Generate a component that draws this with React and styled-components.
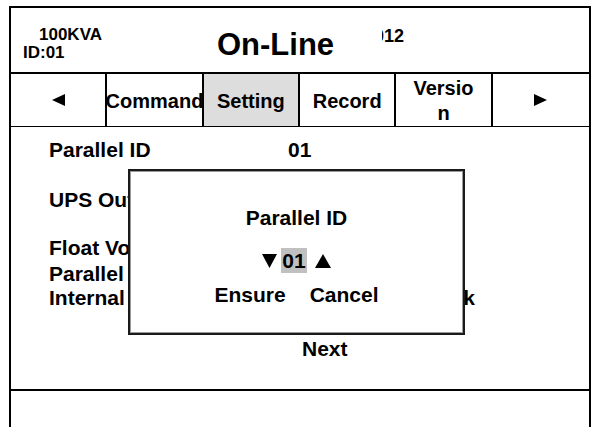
import React from 'react';
import styled, { createGlobalStyle } from 'styled-components';

const GlobalStyle = createGlobalStyle`
  html, body {
    margin: 0;
    padding: 0;
    background: #fff;
  }
  body {
    font-family: 'Liberation Sans', Arial, sans-serif;
    font-weight: bold;
    color: #000;
    overflow: hidden;
  }
`

const Screen = styled.div`
  width: 592px;
  height: 427px;
  padding: 6px 1px 0 9px;
  box-sizing: border-box;
  overflow: hidden;
  background: #fff;
`

const Frame = styled.div`
  height: 440px;
  border: 2px solid #000;
  border-bottom: none;
  display: flex;
  flex-direction: column;
`

const Header = styled.div`
  height: 64px;
  border-bottom: 2px solid #000;
  display: flex;
  align-items: flex-start;
`

const HeaderLeft = styled.div`
  width: 206px;
  padding-top: 18px;
  font-size: 17px;
  line-height: 18px;
`

const Model = styled.div`
  padding-left: 28px;
`

const UnitId = styled.div`
  padding-left: 12px;
`

const Title = styled.div`
  font-size: 31px;
  line-height: 30px;
  padding-top: 22px;
`

const Clock = styled.div`
  width: 22px;
  margin-left: 48px;
  margin-top: 19px;
  overflow: hidden;
  display: flex;
  justify-content: flex-end;
  font-size: 18px;
  line-height: 18px;
  white-space: nowrap;
`

const Tabs = styled.div`
  height: 51px;
  border-bottom: 2px solid #000;
  display: grid;
  grid-template-columns: repeat(6, 1fr);
`

const Tab = styled.div`
  display: flex;
  align-items: center;
  justify-content: center;
  padding: 0 4px;
  border-right: ${p => (p.$last ? 'none' : '2px solid #000')};
  background: ${p => (p.$active ? '#dddddd' : '#fff')};
  font-size: 20px;
  line-height: 25px;
  text-align: center;
  min-width: 0;
`

const TabLabel = styled.span`
  white-space: ${p => (p.$narrow ? 'normal' : 'nowrap')};
  word-break: ${p => (p.$narrow ? 'break-all' : 'normal')};
  max-width: ${p => (p.$narrow ? '64px' : 'none')};
  padding-top: 2px;
`

const Content = styled.div`
  position: relative;
  height: 264px;
  border-bottom: 2px solid #000;
  padding-top: 11px;
  box-sizing: border-box;
  font-size: 21px;
  line-height: 24px;
`

const Row = styled.div`
  display: grid;
  grid-template-columns: 239px 187px;
  padding-left: 38px;
  margin-top: ${p => p.$gap || 0}px;
  white-space: nowrap;
`

const Value = styled.span`
  text-align: ${p => (p.$right ? 'right' : 'left')};
`

const NextLink = styled.div`
  padding-left: 291px;
  margin-top: 27px;
`

const Dialog = styled.div`
  position: absolute;
  left: 117px;
  top: 42px;
  width: 337px;
  height: 166px;
  box-sizing: border-box;
  border: 2px solid #1a1a1a;
  box-shadow: inset 0 0 0 1px #9a9a9a;
  background: #fff;
  display: flex;
  flex-direction: column;
  align-items: center;
  padding-top: 35px;
`

const DialogTitle = styled.div`
  line-height: 24px;
`

const Spinner = styled.div`
  display: flex;
  align-items: center;
  margin-top: 18px;
  height: 25px;
`

const SpinValue = styled.span`
  display: inline-block;
  background: #c0c0c0;
  height: 25px;
  line-height: 26px;
  padding: 0 1px;
  margin: 0 8px 0 4px;
`

const Actions = styled.div`
  display: flex;
  gap: 24px;
  margin-top: 10px;
  line-height: 24px;
`

const Footer = styled.div`
  flex: 1;
`

const Triangle = ({ dir, w = 15, h = 14 }) => {
  const pts = {
    down: `0,0 ${w},0 ${w / 2},${h}`,
    up: `${w / 2},0 ${w},${h} 0,${h}`,
    left: `0,${h / 2} ${w},0 ${w},${h}`,
    right: `0,0 ${w},${h / 2} 0,${h}`,
  }[dir];
  return (
    <svg width={w} height={h} viewBox={`0 0 ${w} ${h}`} style={{ display: 'block' }}>
      <polygon points={pts} fill="#000" />
    </svg>
  );
};

const tabs = [
  { key: 'prev', arrow: 'left' },
  { key: 'cmd', label: 'Command' },
  { key: 'set', label: 'Setting', active: true },
  { key: 'rec', label: 'Record' },
  { key: 'ver', label: 'Version', narrow: true },
  { key: 'next', arrow: 'right' },
];

const rows = [
  { label: 'Parallel ID', value: '01', gap: 0 },
  { label: 'UPS Output Voltage', value: '220V', gap: 26 },
  { label: 'Float Voltage', value: '2.25V', gap: 24 },
  { label: 'Parallel Number', value: '1', gap: 2 },
  { label: 'Internal Battery', value: 'Battery Pack', gap: 0, right: true },
];

export default function App() {
  return (
    <>
      <GlobalStyle />
      <Screen>
        <Frame>
          <Header>
            <HeaderLeft>
              <Model>100KVA</Model>
              <UnitId>ID:01</UnitId>
            </HeaderLeft>
            <Title>On-Line</Title>
            <Clock>2012</Clock>
          </Header>
          <Tabs>
            {tabs.map((t, i) => (
              <Tab key={t.key} $active={t.active} $last={i === tabs.length - 1}>
                {t.arrow ? (
                  <Triangle dir={t.arrow} w={13} h={12} />
                ) : (
                  <TabLabel $narrow={t.narrow}>{t.label}</TabLabel>
                )}
              </Tab>
            ))}
          </Tabs>
          <Content>
            {rows.map(r => (
              <Row key={r.label} $gap={r.gap}>
                <span>{r.label}</span>
                <Value $right={r.right}>{r.value}</Value>
              </Row>
            ))}
            <NextLink>Next</NextLink>
            <Dialog>
              <DialogTitle>Parallel ID</DialogTitle>
              <Spinner>
                <Triangle dir="down" />
                <SpinValue>01</SpinValue>
                <Triangle dir="up" w={16} />
              </Spinner>
              <Actions>
                <span>Ensure</span>
                <span>Cancel</span>
              </Actions>
            </Dialog>
          </Content>
          <Footer />
        </Frame>
      </Screen>
    </>
  );
}
